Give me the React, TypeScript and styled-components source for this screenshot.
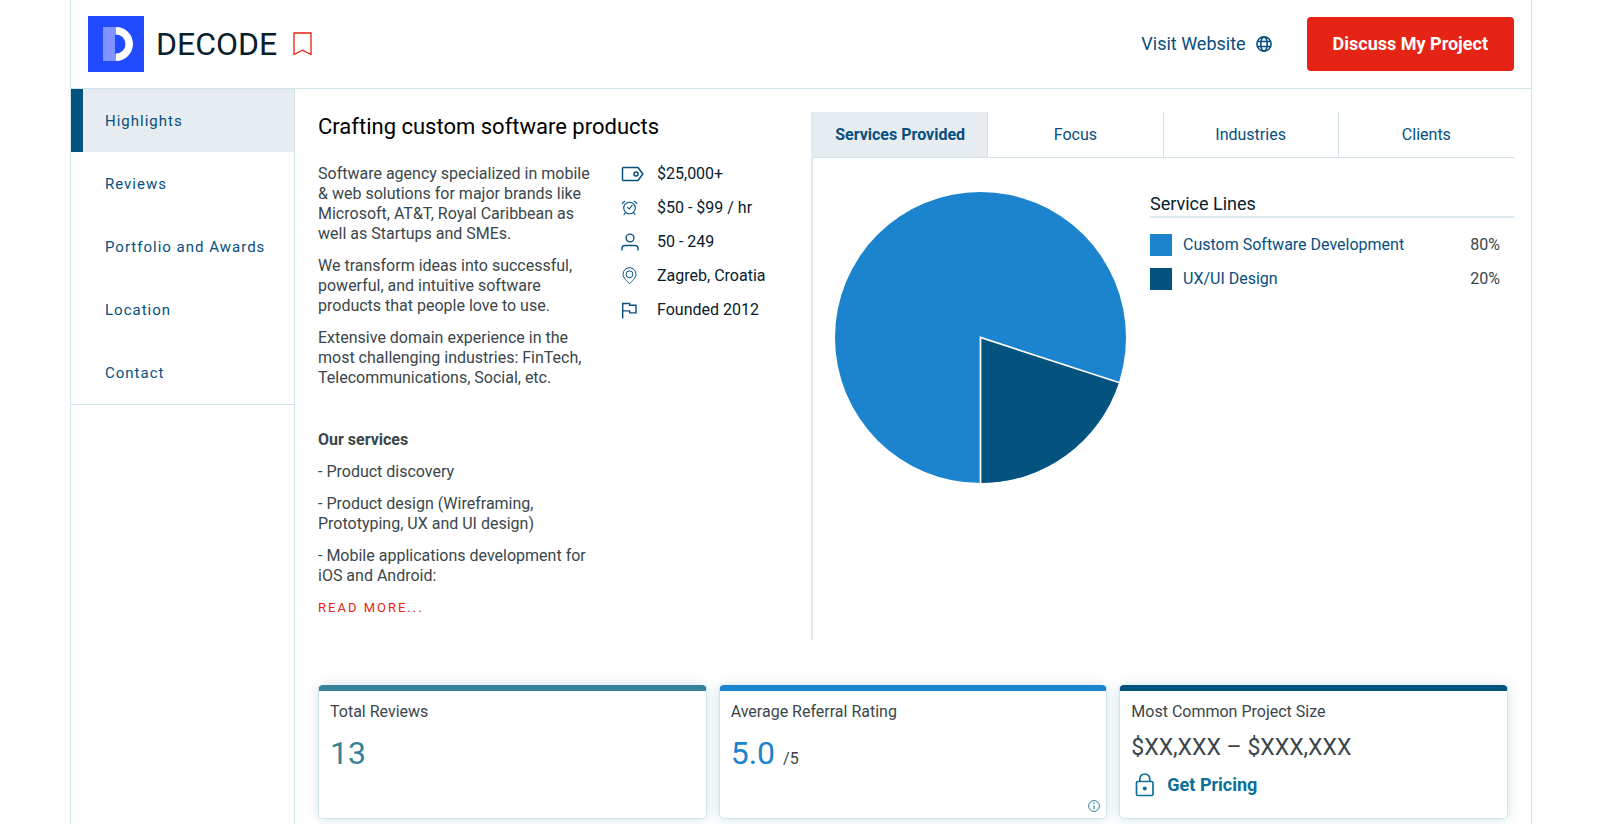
import React, { useState } from "react";
import styled, { createGlobalStyle, css } from "styled-components";

const color = {
  line: "#d0e4ea",
  navy: "#04527e",
  link: "#074f7f",
  blue: "#1c84ce",
  teal: "#37819b",
  red: "#e62415",
  ink: "#08202c",
  text: "#3a464b",
  tint: "#e6ecef",
};

const GlobalStyle = createGlobalStyle`
  *, *::before, *::after { box-sizing: border-box; }
  body {
    margin: 0;
    background: #fff;
    color: ${color.text};
    font: 400 16px/20px Roboto, "Liberation Sans", sans-serif;
  }
  h1, h2, h3, p, ul { margin: 0; padding: 0; font-weight: 400; }
  ul { list-style: none; }
  a { text-decoration: none; }
  button { font: inherit; border: 0; background: none; padding: 0; cursor: pointer; }
  svg { display: block; flex: none; }
`;

const Page = styled.div`
  min-height: 100vh;
  padding: 0 68px 0 70px;
  display: flex;
`;

const Profile = styled.div`
  flex: 1;
  min-width: 0;
  display: flex;
  flex-direction: column;
  border: solid ${color.line};
  border-width: 0 1px;
`;

const Header = styled.header`
  display: flex;
  align-items: center;
  padding: 16px 17px;
  border-bottom: 1px solid ${color.line};
`;

const Company = styled.h1`
  margin: 0 16px 0 12px;
  font-size: 32px;
  line-height: 40px;
  color: ${color.ink};
`;

const IconButton = styled.button`
  color: ${color.red};
`;

const WebsiteLink = styled.a`
  margin-left: auto;
  display: flex;
  align-items: center;
  gap: 10px;
  font-size: 18px;
  line-height: 24px;
  color: ${color.link};
`;

const PrimaryButton = styled.button`
  margin-left: 35px;
  padding: 15px 26px;
  border-radius: 4px;
  background: ${color.red};
  color: #fff;
  font-size: 18px;
  line-height: 24px;
  font-weight: 700;
`;

const Body = styled.div`
  flex: 1;
  display: flex;
`;

const Sidebar = styled.nav`
  flex: none;
  width: 224px;
  border-right: 1px solid ${color.line};
`;

const NavList = styled.ul`
  border-bottom: 1px solid ${color.line};
`;

const NavLink = styled.a<{ $active?: boolean }>`
  display: flex;
  align-items: center;
  height: 63px;
  padding-left: 22px;
  border-left: 12px solid ${(p) => (p.$active ? color.navy : "transparent")};
  background: ${(p) => (p.$active ? color.tint : "transparent")};
  background-clip: padding-box;
  color: ${color.link};
  font-size: 15px;
  letter-spacing: 1px;
`;

const Main = styled.main`
  flex: 1;
  min-width: 0;
  padding: 23px 17px 5px 23px;
`;

const Overview = styled.div`
  display: grid;
  grid-template-columns: 493px minmax(0, 1fr);
`;

const Intro = styled.section`
  padding-bottom: 22px;
`;

const Tagline = styled.h2`
  margin-bottom: 22px;
  font-size: 22px;
  line-height: 30px;
  color: #000;
`;

const IntroColumns = styled.div`
  display: grid;
  grid-template-columns: 276px 1fr;
  column-gap: 27px;
`;

const Description = styled.div`
  display: flex;
  flex-direction: column;
  align-items: flex-start;
  gap: 12px;
`;

const Gap = styled.div`
  height: 18px;
`;

const ReadMore = styled.button`
  font-size: 13px;
  letter-spacing: 2px;
  color: ${color.red};
`;

const Facts = styled.ul`
  display: flex;
  flex-direction: column;
  gap: 14px;
`;

const Fact = styled.li`
  display: grid;
  grid-template-columns: 36px 1fr;
  align-items: center;
  height: 20px;
  color: ${color.ink};
  svg { color: ${color.link}; }
`;

const ChartPanel = styled.section`
  border-left: 2px solid #dfebef;
`;

const Tabs = styled.div`
  display: grid;
  grid-template-columns: repeat(4, minmax(0, 1fr));
  border-bottom: 1px solid ${color.line};
`;

const Tab = styled.button<{ $active: boolean }>`
  height: 45px;
  color: ${color.link};
  &:not(:last-child) { border-right: 1px solid ${color.line}; }
  ${(p) =>
    p.$active &&
    css`
      background: ${color.tint};
      font-weight: 700;
    `}
`;

const ChartBody = styled.div`
  display: grid;
  grid-template-columns: 291px minmax(0, 1fr);
  column-gap: 24px;
  padding: 34px 0 0 22px;
`;

const Legend = styled.div``;

const LegendTitle = styled.h3`
  border-bottom: 2px solid #dbe9ee;
  font-size: 18px;
  line-height: 24px;
  color: ${color.ink};
`;

const LegendList = styled.ul`
  display: flex;
  flex-direction: column;
  gap: 12px;
  padding: 16px 14px 0 0;
`;

const LegendRow = styled.li`
  display: grid;
  grid-template-columns: 22px 1fr auto;
  column-gap: 11px;
  align-items: center;
  line-height: 22px;
  a { color: ${color.link}; }
`;

const Swatch = styled.span<{ $fill: string }>`
  height: 22px;
  background: ${(p) => p.$fill};
`;

const Stats = styled.div`
  display: grid;
  grid-template-columns: repeat(3, minmax(0, 1fr));
  gap: 12px;
  margin: 45px 6px 0 0;
`;

const Card = styled.section<{ $accent: string }>`
  position: relative;
  height: 134px;
  padding: 11px;
  border: 1px solid ${color.line};
  border-top: 6px solid ${(p) => p.$accent};
  border-radius: 5px;
  background: #fff;
  box-shadow: 0 0 12px rgba(30, 105, 135, 0.2);
`;

const CardLabel = styled.h3`
  margin-bottom: 12px;
  font-size: 16px;
`;

const BigValue = styled.p<{ $tone: string }>`
  font-size: 32px;
  line-height: 38px;
  color: ${(p) => p.$tone};
  small {
    margin-left: 8px;
    font-size: 16px;
    color: ${color.text};
  }
`;

const PriceRange = styled.p`
  font-size: 23px;
  line-height: 28px;
`;

const PricingLink = styled.a`
  display: inline-flex;
  align-items: center;
  gap: 12px;
  margin: 11px 0 0 4px;
  font-size: 18px;
  line-height: 24px;
  font-weight: 700;
  color: #0b6f98;
`;

const InfoButton = styled.button`
  position: absolute;
  right: 6px;
  bottom: 6px;
  color: ${color.teal};
`;

const Logo = () => (
  <svg width="56" height="56" viewBox="0 0 56 56" role="img" aria-label="Decode logo">
    <rect width="56" height="56" fill="#224bff" />
    <path d="M15 11h13v8h-1v19h1v7H15z" fill="#8094ff" />
    <path d="M28 11a17 17 0 0 1 0 34v-7.500a9.500 9.500 0 0 0 0-19z" fill="#fff" />
  </svg>
);

const BookmarkIcon = () => (
  <svg width="19" height="24" viewBox="0 0 19 24" fill="none" stroke="currentColor" strokeWidth="1.300">
    <path d="M1 1h17v21.500l-8.500-4.300L1 22.500z" />
  </svg>
);

const GlobeIcon = () => (
  <svg width="16" height="16" viewBox="0 0 16 16" fill="none" stroke="currentColor" strokeWidth="1.600">
    <circle cx="8" cy="8" r="7.100" />
    <ellipse cx="8" cy="8" rx="3.200" ry="7.100" />
    <path d="M1.500 5.500h13M1.500 10.500h13" />
  </svg>
);

const TagIcon = () => (
  <svg width="23" height="16" viewBox="0 0 23 16" fill="none" stroke="currentColor" strokeWidth="1.500" strokeLinejoin="round">
    <path d="M2.500 1.500H17L21.800 8 17 14.500H2.500Q1.500 14.500 1.500 13.500V2.500Q1.500 1.500 2.500 1.500z" />
    <circle cx="15" cy="8" r="2" />
  </svg>
);

const AlarmIcon = () => (
  <svg width="17" height="16" viewBox="0 0 17 16" fill="none" stroke="currentColor" strokeWidth="1.100" strokeLinecap="round">
    <circle cx="8.500" cy="8" r="5.800" />
    <path d="M6.600 7.400l1.600 1.600 3-3.600M1.200 3.800Q2 1.900 3.900 1.200M15.800 3.800Q15 1.900 13.100 1.200M4.500 12.500L3 14.600M12.500 12.500L14 14.600" />
  </svg>
);

const PersonIcon = () => (
  <svg width="18" height="18" viewBox="0 0 18 18" fill="none" stroke="currentColor" strokeWidth="1.400" strokeLinecap="round">
    <circle cx="9" cy="5" r="3.900" />
    <path d="M1 17v-1.500Q1 12.500 4 12.500h10Q17 12.500 17 15.500V17" />
  </svg>
);

const PinIcon = () => (
  <svg width="17" height="18" viewBox="0 0 17 18" fill="none" stroke="currentColor" strokeWidth="1">
    <path d="M8.500 16.800C6 13.900 2 11 2 7.200a6.500 6.500 0 0 1 13 0c0 3.800-4 6.700-6.500 9.600z" />
    <circle cx="8.500" cy="7.300" r="3.400" />
  </svg>
);

const FlagIcon = () => (
  <svg width="17" height="18" viewBox="0 0 17 18" fill="none" stroke="currentColor" strokeWidth="1.400">
    <path d="M1.700 17.500V2.500h7v1.800h6.300v7.600H8.700V9.900h-7" />
  </svg>
);

const LockIcon = () => (
  <svg width="20" height="24" viewBox="0 0 20 24" fill="none" stroke="currentColor" strokeWidth="1.700">
    <rect x="1.500" y="8.500" width="16.500" height="14" rx="1.500" />
    <path d="M4.800 8.500V6a5 5 0 0 1 10 0v2.500" />
    <circle cx="9.800" cy="15.400" r="2" fill="currentColor" stroke="none" />
  </svg>
);

const InfoIcon = () => (
  <svg width="12" height="12" viewBox="0 0 12 12" fill="none" stroke="currentColor">
    <circle cx="6" cy="6" r="5.400" />
    <path d="M6 5.200v4M6 2.600v1.400" strokeWidth="1.200" />
  </svg>
);

const PieChart = () => (
  <svg
    width="291"
    height="291"
    viewBox="-145.500 -145.500 291 291"
    role="img"
    aria-label="Custom Software Development 80%, UX/UI Design 20%"
  >
    <circle r="145.500" fill={color.blue} />
    <path d="M0 0L138.400 45A145.500 145.500 0 0 1 0 145.500z" fill={color.navy} />
    <path d="M138.400 45L0 0V145.500" fill="none" stroke="#fff" strokeWidth="1.700" />
  </svg>
);

const navItems = ["Highlights", "Reviews", "Portfolio and Awards", "Location", "Contact"];
const tabs = ["Services Provided", "Focus", "Industries", "Clients"];
const facts = [
  { icon: <TagIcon />, label: "$25,000+" },
  { icon: <AlarmIcon />, label: "$50 - $99 / hr" },
  { icon: <PersonIcon />, label: "50 - 249" },
  { icon: <PinIcon />, label: "Zagreb, Croatia" },
  { icon: <FlagIcon />, label: "Founded 2012" },
];
const services = [
  { name: "Custom Software Development", share: "80%", fill: color.blue },
  { name: "UX/UI Design", share: "20%", fill: color.navy },
];

export default function App() {
  const [activeTab, setActiveTab] = useState(tabs[0]);

  return (
    <>
      <GlobalStyle />
      <Page>
        <Profile>
          <Header>
            <Logo />
            <Company>DECODE</Company>
            <IconButton aria-label="Bookmark">
              <BookmarkIcon />
            </IconButton>
            <WebsiteLink href="#website">
              Visit Website
              <GlobeIcon />
            </WebsiteLink>
            <PrimaryButton>Discuss My Project</PrimaryButton>
          </Header>

          <Body>
            <Sidebar aria-label="Profile sections">
              <NavList>
                {navItems.map((item, i) => (
                  <li key={item}>
                    <NavLink href="#section" $active={i === 0}>
                      {item}
                    </NavLink>
                  </li>
                ))}
              </NavList>
            </Sidebar>

            <Main>
              <Overview>
                <Intro>
                  <Tagline>Crafting custom software products</Tagline>
                  <IntroColumns>
                    <Description>
                      <p>
                        Software agency specialized in mobile &amp; web solutions for major brands like
                        Microsoft, AT&amp;T, Royal Caribbean as well as Startups and SMEs.
                      </p>
                      <p>
                        We transform ideas into successful, powerful, and intuitive software products that
                        people love to use.
                      </p>
                      <p>
                        Extensive domain experience in the most challenging industries: FinTech,
                        Telecommunications, Social, etc.
                      </p>
                      <Gap />
                      <p>
                        <strong>Our services</strong>
                      </p>
                      <p>- Product discovery</p>
                      <p>- Product design (Wireframing, Prototyping, UX and UI design)</p>
                      <p>- Mobile applications development for iOS and Android:</p>
                      <ReadMore>READ MORE...</ReadMore>
                    </Description>
                    <Facts>
                      {facts.map((fact) => (
                        <Fact key={fact.label}>
                          {fact.icon}
                          <span>{fact.label}</span>
                        </Fact>
                      ))}
                    </Facts>
                  </IntroColumns>
                </Intro>

                <ChartPanel>
                  <Tabs role="tablist">
                    {tabs.map((tab) => (
                      <Tab
                        key={tab}
                        role="tab"
                        aria-selected={tab === activeTab}
                        $active={tab === activeTab}
                        onClick={() => setActiveTab(tab)}
                      >
                        {tab}
                      </Tab>
                    ))}
                  </Tabs>
                  <ChartBody>
                    <PieChart />
                    <Legend>
                      <LegendTitle>Service Lines</LegendTitle>
                      <LegendList>
                        {services.map((s) => (
                          <LegendRow key={s.name}>
                            <Swatch $fill={s.fill} />
                            <a href="#service">{s.name}</a>
                            <span>{s.share}</span>
                          </LegendRow>
                        ))}
                      </LegendList>
                    </Legend>
                  </ChartBody>
                </ChartPanel>
              </Overview>

              <Stats>
                <Card $accent={color.teal}>
                  <CardLabel>Total Reviews</CardLabel>
                  <BigValue $tone={color.teal}>13</BigValue>
                </Card>
                <Card $accent={color.blue}>
                  <CardLabel>Average Referral Rating</CardLabel>
                  <BigValue $tone={color.blue}>
                    5.0<small>/5</small>
                  </BigValue>
                  <InfoButton aria-label="About this rating">
                    <InfoIcon />
                  </InfoButton>
                </Card>
                <Card $accent={color.navy}>
                  <CardLabel>Most Common Project Size</CardLabel>
                  <PriceRange>$XX,XXX – $XXX,XXX</PriceRange>
                  <PricingLink href="#pricing">
                    <LockIcon />
                    Get Pricing
                  </PricingLink>
                </Card>
              </Stats>
            </Main>
          </Body>
        </Profile>
      </Page>
    </>
  );
}
